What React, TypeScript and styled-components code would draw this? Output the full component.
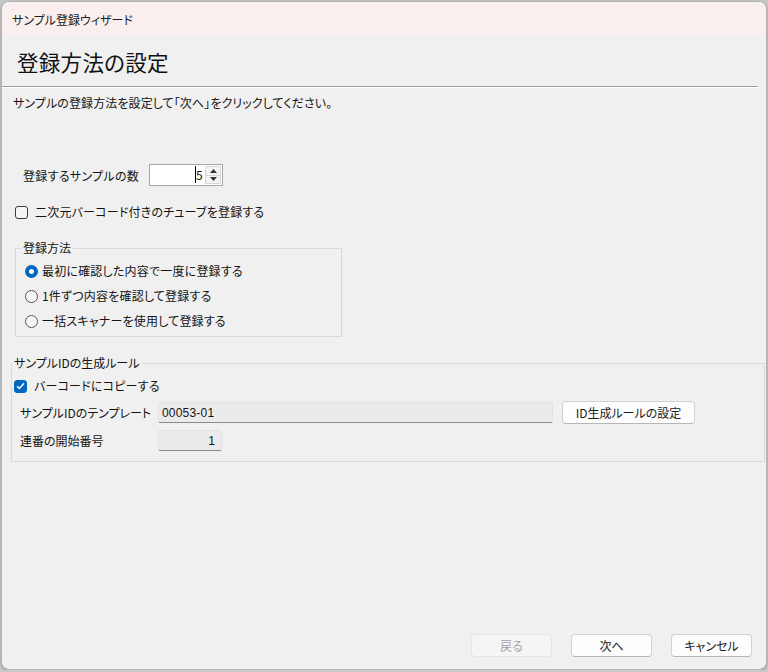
import React from "react";
import styled, { createGlobalStyle } from "styled-components";

const GlobalStyle = createGlobalStyle`
  html, body {
    margin: 0;
    padding: 0;
    background: #c9c9c9;
  }
  body {
    font-family: "Noto Sans CJK JP", "Noto Sans", sans-serif;
    font-size: 12px;
    color: #141414;
    font-feature-settings: "palt";
  }
  * {
    box-sizing: border-box;
  }
`;

const Window = styled.div`
  width: 766px;
  height: 669px;
  margin: 1px 0 0 1px;
  background: #f0f0f0;
  border: 1px solid #b4b4b4;
  border-radius: 8px;
  box-shadow: 0 1px 3px rgba(0, 0, 0, 0.25);
  display: flex;
  flex-direction: column;
  overflow: hidden;
`;

const TitleBar = styled.div`
  height: 34px;
  flex: none;
  display: flex;
  align-items: center;
  padding-left: 10px;
  background: #f9efee;
  font-size: 12px;
  color: #202020;
`;

const Body = styled.div`
  flex: 1;
  display: flex;
  flex-direction: column;
`;

const Heading = styled.h1`
  margin: 12px 0 0 15px;
  font-size: 21.5px;
  line-height: 28px;
  font-weight: 400;
  letter-spacing: 0.3px;
  color: #111;
`;

const Separator = styled.div`
  margin: 10px 8px 0 0;
  height: 2px;
  border-top: 1px solid #a0a0a0;
  border-bottom: 1px solid #ffffff;
`;

const Description = styled.p`
  margin: 7px 0 0 11px;
  line-height: 16px;
  letter-spacing: 0.1px;
`;

const SpinRow = styled.div`
  margin: 53px 0 0 21px;
  display: flex;
  align-items: center;
  gap: 10px;
  height: 22px;
  letter-spacing: 0.3px;
`;

const SpinBox = styled.div`
  width: 74px;
  height: 22px;
  background: #fff;
  border: 1px solid #a8a8a8;
  display: flex;
  align-items: center;
`;

const SpinValue = styled.div`
  flex: 1;
  text-align: right;
  padding-right: 2px;
  line-height: 16px;
  span {
    border-left: 1px solid #000;
    padding-left: 0;
  }
`;

const SpinButtons = styled.div`
  width: 16px;
  height: 18px;
  margin-right: 1px;
  display: flex;
  flex-direction: column;
  border: 1px solid #d8d8d8;
  background: #f3f3f3;
`;

const SpinHalf = styled.div`
  flex: 1;
  display: flex;
  align-items: center;
  justify-content: center;
  & + & {
    border-top: 1px solid #d8d8d8;
  }
`;

const CheckRow = styled.label<{ $indent: number; $top: number }>`
  display: flex;
  align-items: center;
  gap: 7px;
  height: 16px;
  margin: ${(p) => p.$top}px 0 0 ${(p) => p.$indent}px;
  line-height: 16px;
  letter-spacing: 0.2px;
`;

const CheckBox = styled.span<{ $checked?: boolean }>`
  width: 13px;
  height: 13px;
  flex: none;
  border-radius: 3px;
  border: 1px solid ${(p) => (p.$checked ? "#0067c0" : "#3a3a3a")};
  background: ${(p) => (p.$checked ? "#0067c0" : "#f6f6f6")};
  display: flex;
  align-items: center;
  justify-content: center;
`;

const Group = styled.fieldset<{ $width: number; $top: number; $left: number }>`
  margin: ${(p) => p.$top}px 0 0 ${(p) => p.$left}px;
  width: ${(p) => p.$width}px;
  border: 1px solid #d9d9d9;
  padding: 0;
  display: flex;
  flex-direction: column;
  min-width: 0;
`;

const Legend = styled.legend<{ $shift: number }>`
  padding: 0 2px;
  margin-left: ${(p) => p.$shift}px;
  line-height: 16px;
`;

const RadioList = styled.div`
  display: flex;
  flex-direction: column;
  gap: 9px;
  padding: 7px 0 7px 9px;
`;

const RadioRow = styled.label`
  display: flex;
  align-items: center;
  gap: 4px;
  height: 16px;
  line-height: 16px;
  letter-spacing: 0.2px;
`;

const Radio = styled.span<{ $on?: boolean }>`
  width: 13px;
  height: 13px;
  flex: none;
  border-radius: 50%;
  border: ${(p) => (p.$on ? "4px solid #0067c0" : "1px solid #555")};
  background: ${(p) => (p.$on ? "#fff" : "#f6f6f6")};
`;

const IdRules = styled.div`
  display: flex;
  flex-direction: column;
  padding: 7px 0 10px 1px;
`;

const FieldRow = styled.div<{ $top: number; $height: number }>`
  display: flex;
  align-items: center;
  gap: 9px;
  height: ${(p) => p.$height}px;
  margin-top: ${(p) => p.$top}px;
`;

const FieldLabel = styled.span`
  width: 145px;
  padding-left: 7px;
  flex: none;
  margin-right: -9px;
`;

const ReadOnlyBox = styled.div<{ $width: number; $align?: string }>`
  width: ${(p) => p.$width}px;
  height: 21px;
  background: #ebebeb;
  border: 1px solid #e2e2e2;
  border-bottom: 1px solid #8a8a8a;
  border-radius: 2px;
  padding: 0 6px 0 3px;
  display: flex;
  align-items: center;
  justify-content: ${(p) => (p.$align === "right" ? "flex-end" : "flex-start")};
  font-family: "Liberation Sans", "Noto Sans CJK JP", sans-serif;
  font-size: 12px;
  letter-spacing: 0.2px;
`;

const Button = styled.button<{ $width: number; $disabled?: boolean }>`
  width: ${(p) => p.$width}px;
  height: 23px;
  padding: 0;
  font: inherit;
  font-size: 12px;
  color: ${(p) => (p.$disabled ? "#a3a3a3" : "#1b1b1b")};
  background: ${(p) => (p.$disabled ? "#f5f5f5" : "#fdfdfd")};
  border: 1px solid ${(p) => (p.$disabled ? "#e6e6e6" : "#d2d2d2")};
  border-bottom-color: ${(p) => (p.$disabled ? "#e6e6e6" : "#b6b6b6")};
  border-radius: 4px;
  display: flex;
  align-items: center;
  justify-content: center;
`;

const Footer = styled.div`
  display: flex;
  justify-content: flex-end;
  gap: 19px;
  padding: 0 14px 12px 0;
`;

const Spacer = styled.div`
  flex: 1;
`;

const Arrow = ({ up }: { up?: boolean }) => (
  <svg width="7" height="4" viewBox="0 0 7 4">
    <path d={up ? "M0 4 L3.5 0 L7 4 Z" : "M0 0 L3.5 4 L7 0 Z"} fill="#333" />
  </svg>
);

const Check = () => (
  <svg width="9" height="8" viewBox="0 0 9 8">
    <path d="M1 4.2 L3.4 6.5 L8 1.3" fill="none" stroke="#fff" strokeWidth="1.3" />
  </svg>
);

export default function App() {
  return (
    <>
      <GlobalStyle />
      <Window>
        <TitleBar>サンプル登録ウィザード</TitleBar>
        <Body>
          <Heading>登録方法の設定</Heading>
          <Separator />
          <Description>サンプルの登録方法を設定して「次へ」をクリックしてください。</Description>

          <SpinRow>
            <span>登録するサンプルの数</span>
            <SpinBox>
              <SpinValue>
                <span>5</span>
              </SpinValue>
              <SpinButtons>
                <SpinHalf>
                  <Arrow up />
                </SpinHalf>
                <SpinHalf>
                  <Arrow />
                </SpinHalf>
              </SpinButtons>
            </SpinBox>
          </SpinRow>

          <CheckRow $indent={13} $top={18}>
            <CheckBox />
            <span>二次元バーコード付きのチューブを登録する</span>
          </CheckRow>

          <Group $width={327} $top={20} $left={13}>
            <Legend $shift={5}>登録方法</Legend>
            <RadioList>
              <RadioRow>
                <Radio $on />
                最初に確認した内容で一度に登録する
              </RadioRow>
              <RadioRow>
                <Radio />
                1件ずつ内容を確認して登録する
              </RadioRow>
              <RadioRow>
                <Radio />
                一括スキャナーを使用して登録する
              </RadioRow>
            </RadioList>
          </Group>

          <Group $width={754} $top={18} $left={9}>
            <Legend $shift={0}>サンプルIDの生成ルール</Legend>
            <IdRules>
              <CheckRow $indent={1} $top={0}>
                <CheckBox $checked>
                  <Check />
                </CheckBox>
                <span>バーコードにコピーする</span>
              </CheckRow>
              <FieldRow $top={7} $height={23}>
                <FieldLabel>サンプルIDのテンプレート</FieldLabel>
                <ReadOnlyBox $width={395}>00053-01</ReadOnlyBox>
                <Button $width={133}>ID生成ルールの設定</Button>
              </FieldRow>
              <FieldRow $top={6} $height={21}>
                <FieldLabel>連番の開始番号</FieldLabel>
                <ReadOnlyBox $width={64} $align="right">
                  1
                </ReadOnlyBox>
              </FieldRow>
            </IdRules>
          </Group>

          <Spacer />
          <Footer>
            <Button $width={81} $disabled>
              戻る
            </Button>
            <Button $width={81}>次へ</Button>
            <Button $width={81}>キャンセル</Button>
          </Footer>
        </Body>
      </Window>
    </>
  );
}
